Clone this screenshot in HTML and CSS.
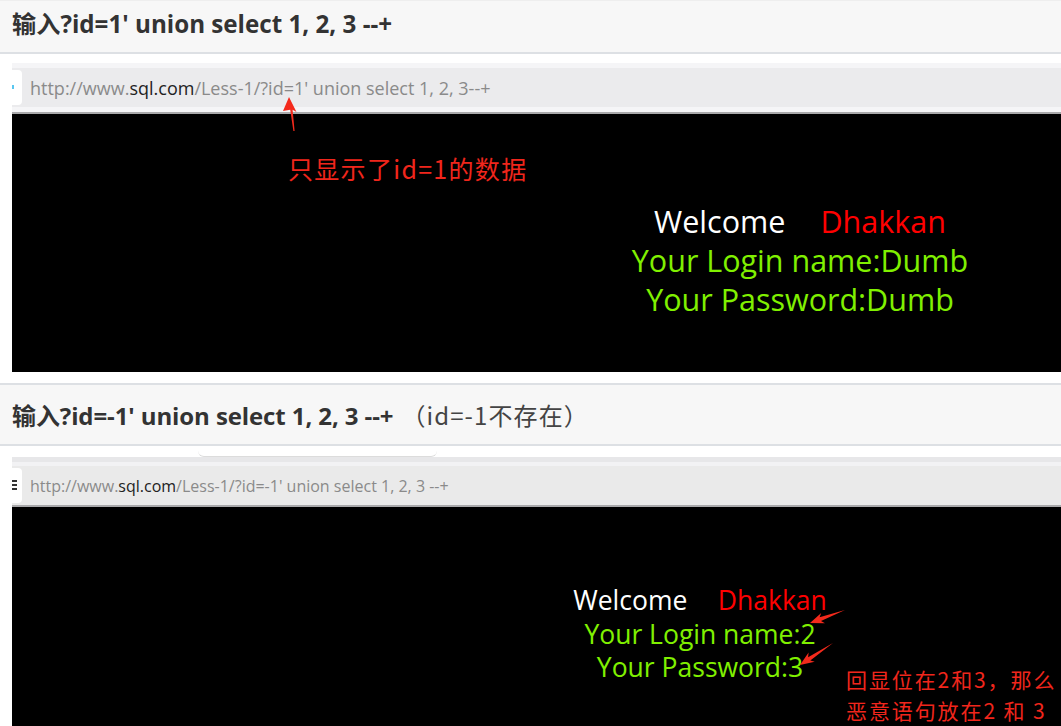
FILE: index.html
```html
<!DOCTYPE html>
<html lang="zh-CN">
<head>
<meta charset="utf-8">
<title>SQL union select</title>
<link rel="stylesheet" href="styles.css">
</head>
<body>
  <div class="title title-first">
    <span class="strong">输入?id=1' union select 1, 2, 3 --+</span>
  </div>

  <div class="shot shot-one">
    <div class="bar">
      <div class="bar-inner">
        <div class="tab-stub"><span class="stub-dot"></span></div>
        <div class="url url-one">http://www.<b>sql.com</b>/Less-1/?id=1' union select 1, 2, 3--+</div>
      </div>
    </div>
    <div class="screen screen-one">
      <div class="result result-one">
        <div class="line"><span class="white">Welcome</span><span class="red name">Dhakkan</span></div>
        <div class="line green">Your Login name:Dumb</div>
        <div class="line green">Your Password:Dumb</div>
      </div>
    </div>
    <div class="note note-one">只显示了id=1的数据</div>
    <svg class="arrows" width="1049" height="309" viewBox="0 0 1049 309">
      <polygon points="277,34 284.5,49 280.6,46.8 282.6,68 281.4,68 278.2,46.8 271,48" fill="#f42a1c"/>
    </svg>
  </div>

  <div class="title title-second">
    <span class="strong condensed">输入?id=-1' union select 1, 2, 3 --+</span><span class="plain">（id=-1不存在）</span>
  </div>

  <div class="shot shot-two">
    <div class="tabstrip"><div class="tab-edge"></div></div>
    <div class="bar bar-two">
      <div class="bar-inner">
        <div class="tab-stub"><span class="stub-glyph"></span></div>
        <div class="url url-two">http://www.<b>sql.com</b>/Less-1/?id=-1' union select 1, 2, 3 --+</div>
      </div>
    </div>
    <div class="screen screen-two">
      <div class="result result-two">
        <div class="line"><span class="white">Welcome</span><span class="red name">Dhakkan</span></div>
        <div class="line green">Your Login name:2</div>
        <div class="line green">Your Password:3</div>
      </div>
    </div>
    <div class="note note-two">
      <div class="note-line">回显位在2和3，那么</div>
      <div class="note-line">恶意语句放在2 和 3</div>
    </div>
    <svg class="arrows arrows-two" width="1049" height="280" viewBox="0 0 1049 280">
      <polygon points="798,166 813,166.3 809,164.1 833,153 807.6,160.3 809.2,155.9" fill="#f42a1c"/>
      <polygon points="788,208 802.7,204.8 798.3,203.6 821,186 796.1,200.2 796.6,195.6" fill="#f42a1c"/>
    </svg>
  </div>
</body>
</html>
```

FILE: styles.css
```css
html, body {
  margin: 0;
  padding: 0;
  background: #ffffff;
  overflow: hidden;
}

body {
  width: 1061px;
  height: 726px;
  font-family: "Open Sans", "Noto Sans CJK SC", sans-serif;
}

.title {
  display: flex;
  align-items: center;
  background: #f7f7f7;
  border-bottom: 2px solid #dde0e4;
  padding-left: 12px;
  color: #333333;
  white-space: nowrap;
}

.title-first {
  height: 42px;
  padding-bottom: 9px;
  border-top: 1px solid #eeeeee;
}

.title-second {
  height: 59px;
  margin-top: 11px;
  border-top: 2px solid #dde0e4;
}

.strong {
  font-weight: 700;
  font-size: 24.2px;
  letter-spacing: 0;
}

.condensed {
  font-size: 24px;
  letter-spacing: -0.1px;
}

.plain {
  font-family: "Noto Sans CJK SC", sans-serif;
  font-weight: 400;
  font-size: 24px;
  color: #444444;
  margin-left: 8px;
  letter-spacing: 1.1px;
}

.shot {
  position: relative;
  margin-left: 12px;
}

.shot-one {
  margin-top: 9px;
}

.shot-two {
  margin-top: 0;
}

.bar {
  background: #f5f5f7;
  padding: 5px 0;
  border-bottom: 2px solid #a9a9ab;
}

.bar-inner {
  height: 39px;
  background: #ebebed;
  display: flex;
  align-items: center;
}

.bar-two {
  background: #f2f2f4;
  padding: 4px 0 0;
  border-top: 5px solid #e7e7e9;
}

.bar-two .bar-inner {
  background: #eaeaea;
}

.tab-stub {
  width: 10px;
  height: 35px;
  background: #ffffff;
  border-radius: 0 4px 4px 0;
  position: relative;
  flex: none;
}

.stub-dot {
  position: absolute;
  left: 0;
  top: 15px;
  width: 2px;
  height: 4px;
  background: #59c7f0;
}

.stub-glyph {
  position: absolute;
  left: 0;
  top: 12px;
  width: 5px;
  height: 10px;
  background: linear-gradient(#333 0 2px, transparent 2px 4px, #333 4px 6px, transparent 6px 8px, #333 8px 10px);
}

.url {
  margin-left: 8px;
  color: #8a8a8a;
  font-family: "Open Sans", "Noto Sans CJK SC", sans-serif;
  white-space: nowrap;
}

.url b {
  font-weight: 400;
  color: #222222;
}

.url-one {
  font-size: 18px;
}

.url-two {
  font-size: 16px;
  letter-spacing: 0;
}

.screen {
  background: #000000;
  display: flex;
}

.screen-one {
  height: 258px;
}

.screen-two {
  height: 230px;
}

.result {
  flex: 1;
  display: flex;
  flex-direction: column;
  align-items: center;
  font-family: "Open Sans", sans-serif;
  white-space: nowrap;
}

.result-one {
  padding-left: 527px;
  padding-top: 88px;
  font-size: 30.5px;
  line-height: 39px;
}

.result-two {
  padding-left: 327px;
  padding-top: 77px;
  font-size: 26.5px;
  line-height: 33.5px;
}

.white { color: #ffffff; }
.red { color: #ff0000; }
.green { color: #80f000; }

.name {
  margin-left: 1.15em;
}

.note {
  position: absolute;
  color: #f0261c;
  font-family: "Noto Sans CJK SC", sans-serif;
  white-space: nowrap;
}

.note-one {
  left: 276px;
  top: 88px;
  font-size: 25px;
  line-height: 34px;
  letter-spacing: 1.3px;
}

.note-two {
  left: 834px;
  top: 218px;
  font-size: 21px;
  line-height: 30.5px;
  letter-spacing: 1.9px;
}

.note-line {
  height: 30.5px;
}

.arrows {
  position: absolute;
  left: 0;
  top: 0;
  pointer-events: none;
}

.arrows-two {
  top: 11px;
}

.tabstrip {
  height: 11px;
  display: flex;
}

.tab-edge {
  margin-left: 186px;
  width: 239px;
  height: 10px;
  background: #ffffff;
  border-bottom: 1px solid #dcdcdc;
  border-radius: 0 0 6px 6px;
}
```
